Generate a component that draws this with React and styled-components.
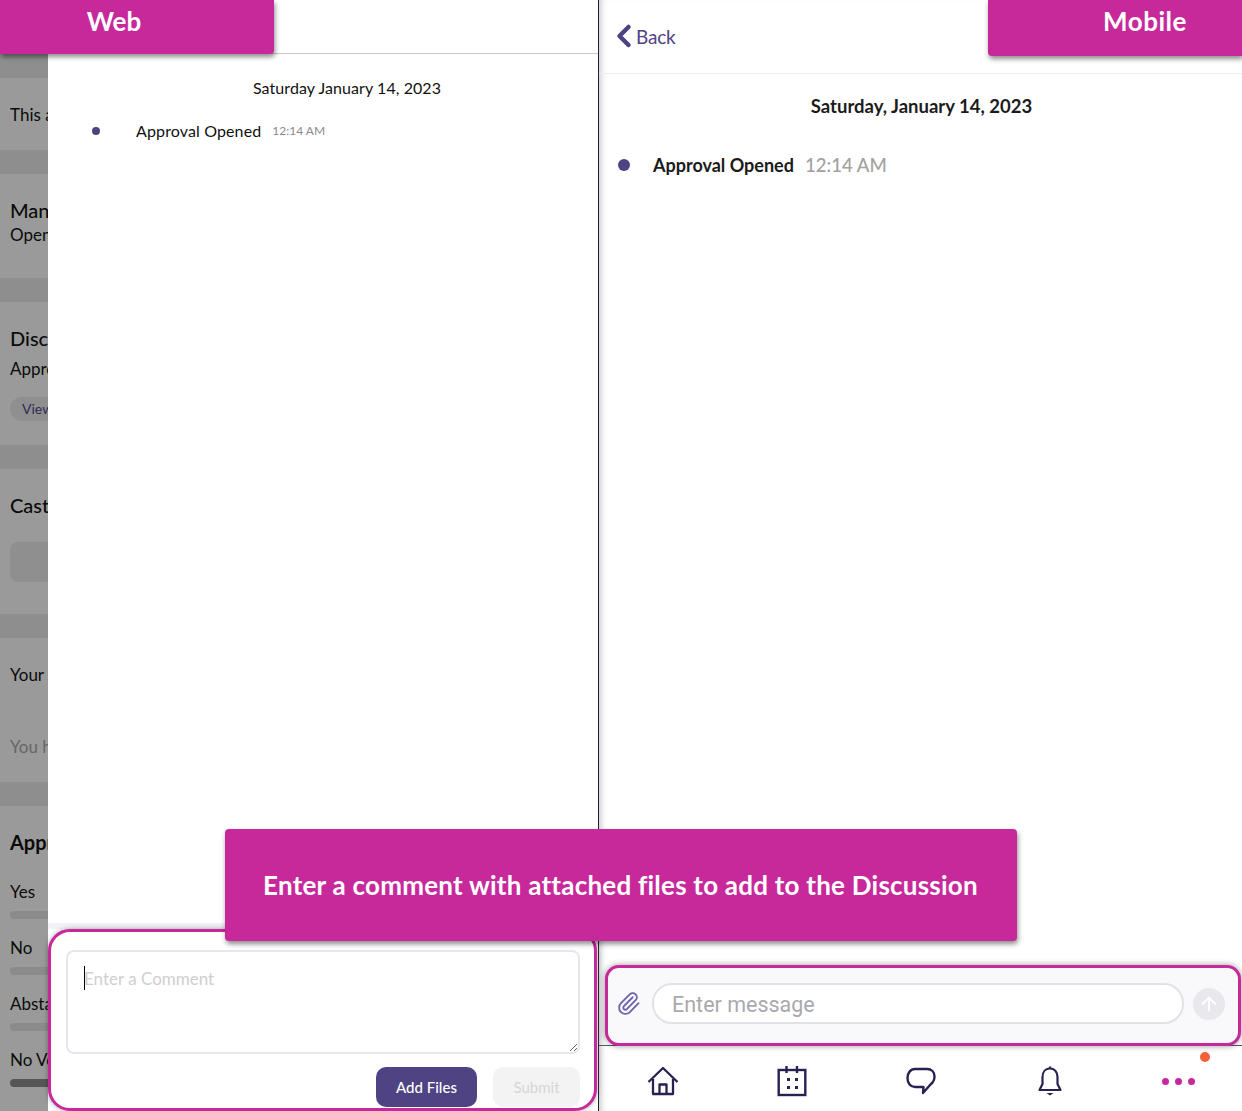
import React from "react";
import styled, { createGlobalStyle } from "styled-components";
import { ChevronLeft, Paperclip, ArrowUp } from "lucide-react";

const magenta = "#c7299b";
const purple = "#4f4384";
const navy = "#2a2152";

const GlobalStyle = createGlobalStyle`
  html, body {
    margin: 0;
    padding: 0;
    background: #fff;
    font-family: "Lato", "Liberation Sans", sans-serif;
  }
  * { box-sizing: border-box; }
`;

const Page = styled.div`
  position: relative;
  display: flex;
  width: 1242px;
  height: 1111px;
  overflow: hidden;
  background: #fff;
`;

const Callout = styled.div`
  position: absolute;
  z-index: 5;
  display: flex;
  align-items: center;
  justify-content: center;
  background: ${magenta};
  color: #fff;
  font-weight: 700;
  font-size: 26px;
  box-shadow: 1px 3px 5px rgba(0, 0, 0, 0.45);
`;

const WebLabel = styled(Callout)`
  left: 0;
  top: 0;
  width: 274px;
  height: 54px;
  padding: 5px 46px 0 0;
  align-items: flex-start;
  border-radius: 0 0 4px 0;
`;

const MobileLabel = styled(Callout)`
  left: 988px;
  top: 0;
  width: 254px;
  height: 56px;
  padding: 5px 0 0 60px;
  align-items: flex-start;
  border-radius: 0 0 0 4px;
  letter-spacing: 0.5px;
`;

const CommentLabel = styled(Callout)`
  left: 225px;
  top: 829px;
  width: 792px;
  height: 112px;
  padding-right: 1px;
  border-radius: 4px;
  letter-spacing: 0.23px;
`;

const WebSide = styled.div`
  display: flex;
  width: 598px;
  flex-shrink: 0;
`;

const Backdrop = styled.div`
  display: flex;
  flex-direction: column;
  width: 48px;
  flex-shrink: 0;
  padding-top: 54px;
  overflow: hidden;
  background: #8e8e8e;
  white-space: nowrap;
  color: #0b0b0b;
`;

const BackSection = styled.div`
  height: ${(p) => p.$h}px;
  flex-shrink: 0;
  margin-top: 24px;
  padding: ${(p) => p.$top}px 0 0 10px;
  background: #9a9a9a;
`;

const LastSection = styled(BackSection)`
  flex: 1;
  height: auto;
`;

const BackTitle = styled.div`
  font-size: 20px;
  font-weight: ${(p) => p.$bold ? 700 : 500};
  line-height: 24px;
`;

const BackText = styled.div`
  font-size: 17px;
  line-height: 24px;
  margin-top: ${(p) => p.$mt || 0}px;
  color: ${(p) => p.$muted ? "#666" : "#0b0b0b"};
`;

const BackPill = styled.div`
  width: 60px;
  height: 24px;
  margin-top: 16px;
  padding-left: 12px;
  border-radius: 12px;
  background: #8f8f8f;
  color: #322a55;
  font-size: 14px;
  line-height: 24px;
`;

const BackBox = styled.div`
  width: 60px;
  height: 40px;
  margin-top: 25px;
  border-radius: 8px;
  background: #8f8f8f;
`;

const BackBar = styled.div`
  width: 60px;
  height: 8px;
  margin: 7px 0 17px;
  border-radius: 4px;
  background: ${(p) => p.$dark ? "#565656" : "#8b8b8b"};
`;

const Panel = styled.div`
  display: flex;
  flex-direction: column;
  flex: 1;
  min-width: 0;
  background: #fff;
`;

const PanelHeader = styled.div`
  height: 54px;
  flex-shrink: 0;
  border-bottom: 1px solid #c8c8c8;
`;

const PanelBody = styled.div`
  flex: 1;
  padding: 24px 0 0 48px;
`;

const WebDate = styled.div`
  text-align: center;
  font-size: 16px;
  letter-spacing: 0.08px;
  line-height: 20px;
  color: #111;
`;

const WebRow = styled.div`
  display: flex;
  align-items: center;
  height: 20px;
  margin-top: 22px;
`;

const Dot = styled.span`
  width: ${(p) => p.$size}px;
  height: ${(p) => p.$size}px;
  flex-shrink: 0;
  border-radius: 50%;
  background: ${purple};
`;

const WebDot = styled(Dot)`
  margin: 1px 36px 0 -4px;
`;

const WebEvent = styled.span`
  font-size: 16px;
  letter-spacing: 0.13px;
  color: #111;
`;

const WebTime = styled.span`
  margin-left: 11px;
  font-size: 12px;
  color: #8a8a8a;
`;

const WebStrip = styled.div`
  height: 6px;
  flex-shrink: 0;
  background: #f3f3f7;
`;

const Composer = styled.div`
  display: flex;
  flex-direction: column;
  height: 182px;
  flex-shrink: 0;
  margin-right: 1px;
  padding: 18px 14px 0 15px;
  background: #fff;
  border: 3px solid ${magenta};
  border-radius: 22px;
  box-shadow: 0 0 5px rgba(0, 0, 0, 0.35);
`;

const CommentWrap = styled.div`
  position: relative;
  height: 104px;
  flex-shrink: 0;
`;

const CommentInput = styled.textarea`
  display: block;
  width: 100%;
  height: 100%;
  padding: 15px 16px;
  border: 2px solid #e6e6ee;
  border-radius: 8px;
  outline: none;
  background: #fff;
  font-family: inherit;
  font-size: 17px;
  line-height: 24px;

  &::placeholder {
    color: #cfcfcf;
  }
`;

const Caret = styled.span`
  position: absolute;
  left: 18px;
  top: 16px;
  width: 1px;
  height: 24px;
  background: #000;
`;

const ComposerActions = styled.div`
  display: flex;
  justify-content: flex-end;
  gap: 16px;
  margin-top: 13px;
`;

const ActionButton = styled.button`
  width: ${(p) => p.$w}px;
  height: 40px;
  padding: 0;
  border: none;
  border-radius: 10px;
  background: ${(p) => p.$primary ? purple : "#f3f3f3"};
  color: ${(p) => p.$primary ? "#fff" : "#d6d6d6"};
  font-family: inherit;
  font-size: 15px;
  font-weight: ${(p) => p.$primary ? 500 : 400};
`;

const Divider = styled.div`
  width: 1px;
  flex-shrink: 0;
  background: #20203a;
`;

const MobileSide = styled.div`
  display: flex;
  flex-direction: column;
  flex: 1;
  min-width: 0;
  box-shadow: inset 7px 0 6px -5px rgba(0, 0, 0, 0.22);
`;

const MobileHeader = styled.div`
  display: flex;
  align-items: center;
  height: 74px;
  flex-shrink: 0;
  padding: 0 0 1px 7px;
  border-bottom: 1px solid #eee;
`;

const BackLink = styled.div`
  display: flex;
  align-items: center;
  color: ${purple};
  font-size: 19px;
  letter-spacing: -0.2px;
`;

const BackChevron = styled(ChevronLeft)`
  margin-right: -6px;
`;

const MobileBody = styled.div`
  flex: 1;
  padding-top: 20px;
`;

const MobileDate = styled.div`
  padding-left: 2px;
  text-align: center;
  font-size: 18.5px;
  font-weight: 700;
  line-height: 24px;
  color: #1b1b1b;
`;

const MobileRow = styled.div`
  display: flex;
  align-items: center;
  height: 24px;
  margin-top: 35px;
  padding-left: 19px;
`;

const MobileDot = styled(Dot)`
  margin-right: 23px;
`;

const MobileEvent = styled.span`
  font-size: 18px;
  font-weight: 700;
  color: #1b1b1b;
`;

const MobileTime = styled.span`
  margin-left: 11px;
  font-size: 18.6px;
  font-weight: 500;
  color: #a2a2a2;
`;

const MessageArea = styled.div`
  flex-shrink: 0;
  height: 81px;
  padding: 0 1px 0 6px;
  border-bottom: 1px solid #5a5a5a;
`;

const MessageBar = styled.div`
  display: flex;
  align-items: center;
  height: 81px;
  padding: 0 13px 4px 8px;
  background: #f9f9fb;
  border: 3px solid ${magenta};
  border-radius: 14px;
  box-shadow: 0 0 6px rgba(0, 0, 0, 0.4);
`;

const ClipIcon = styled(Paperclip)`
  flex-shrink: 0;
  color: #6f63a8;
`;

const MessageInput = styled.div`
  flex: 1;
  height: 41px;
  margin: 0 9px 0 11px;
  padding-left: 18px;
  border: 2px solid #e2e2e6;
  border-radius: 20px;
  background: #fff;
  color: #a9a9ad;
  font-family: "Roboto", sans-serif;
  font-size: 21.5px;
  line-height: 40px;
`;

const SendButton = styled.div`
  display: flex;
  align-items: center;
  justify-content: center;
  width: 32px;
  height: 32px;
  flex-shrink: 0;
  border-radius: 50%;
  background: #e9e9ed;
  color: #fff;
`;

const BottomNav = styled.div`
  display: grid;
  grid-template-columns: repeat(5, 129px);
  align-items: center;
  height: 65px;
  flex-shrink: 0;
  margin-left: -1px;
  padding-top: 5px;
`;

const NavItem = styled.div`
  position: relative;
  display: flex;
  justify-content: center;
  color: ${navy};
`;

const MoreDots = styled.div`
  display: flex;
  gap: 6px;
`;

const MoreDot = styled.span`
  width: 7px;
  height: 7px;
  border-radius: 50%;
  background: ${magenta};
`;

const Badge = styled.span`
  position: absolute;
  left: 86px;
  top: -26px;
  width: 10px;
  height: 10px;
  border-radius: 50%;
  background: #f4603a;
`;

const HomeIcon = () => (
  <svg width="32" height="32" viewBox="0 0 32 32" fill="none" stroke="currentColor" strokeWidth="2.3" strokeLinejoin="round">
    <path d="M1.500 17 16 3l14.500 14" />
    <path d="M6 14v15h20V14" />
    <path d="M12.500 29v-9.500h7V29" />
  </svg>
);

const CalendarIcon = () => (
  <svg width="32" height="32" viewBox="0 0 32 32" fill="none" stroke="currentColor" strokeWidth="2.4">
    <rect x="2.700" y="5" width="26.600" height="25" />
    <path d="M10.500 1v7M21 1v7" />
    <g fill="currentColor" stroke="none">
      <rect x="11" y="13" width="3" height="3" />
      <rect x="19" y="13" width="3" height="3" />
      <rect x="11" y="21" width="3" height="3" />
      <rect x="19" y="21" width="3" height="3" />
    </g>
  </svg>
);

const ChatIcon = () => (
  <svg width="32" height="32" viewBox="0 0 32 32" fill="none" stroke="currentColor" strokeWidth="2.4" strokeLinejoin="round">
    <path d="M10 4h12c4.500 0 7.500 3 7.500 7.500 0 3.500-1.500 6-4 8L18 28l.5-6H10C5.500 22 2.500 18.500 2.500 13 2.500 8 5.500 4 10 4Z" />
  </svg>
);

const BellIcon = () => (
  <svg width="32" height="32" viewBox="0 0 32 32" fill="none" stroke="currentColor" strokeWidth="2.200" strokeLinejoin="round">
    <path d="M16 3.500c-5 0-7.500 4-7.500 8.500v7L5.500 25h21l-3-6v-7c0-4.500-2.500-8.500-7.500-8.500Z" />
    <path d="M16 1.500v2" />
    <path d="M12.500 28h7l-3.500 2.500Z" fill="currentColor" stroke="none" />
  </svg>
);

const App = () => {
  return (
    <Page>
      <GlobalStyle />
      <WebLabel>Web</WebLabel>
      <MobileLabel>Mobile</MobileLabel>
      <CommentLabel>Enter a comment with attached files to add to the Discussion</CommentLabel>

      <WebSide>
        <Backdrop>
          <BackSection $h={72} $top={25}>
            <BackText>This approval</BackText>
          </BackSection>
          <BackSection $h={104} $top={24}>
            <BackTitle>Manager</BackTitle>
            <BackText $mt={1}>Open</BackText>
          </BackSection>
          <BackSection $h={143} $top={24}>
            <BackTitle>Discussion</BackTitle>
            <BackText $mt={7}>Approval</BackText>
            <BackPill>View</BackPill>
          </BackSection>
          <BackSection $h={145} $top={24}>
            <BackTitle>Cast</BackTitle>
            <BackBox />
          </BackSection>
          <BackSection $h={144} $top={25}>
            <BackText>Your</BackText>
            <BackText $mt={48} $muted>You have</BackText>
          </BackSection>
          <LastSection $top={24}>
            <BackTitle $bold>Approval</BackTitle>
            <BackText $mt={26}>Yes</BackText>
            <BackBar />
            <BackText>No</BackText>
            <BackBar />
            <BackText>Abstain</BackText>
            <BackBar />
            <BackText>No Vote</BackText>
            <BackBar $dark />
          </LastSection>
        </Backdrop>

        <Panel>
          <PanelHeader />
          <PanelBody>
            <WebDate>Saturday January 14, 2023</WebDate>
            <WebRow>
              <WebDot $size={8} />
              <WebEvent>Approval Opened</WebEvent>
              <WebTime>12:14 AM</WebTime>
            </WebRow>
          </PanelBody>
          <WebStrip />
          <Composer>
            <CommentWrap>
              <CommentInput placeholder="Enter a Comment" />
              <Caret />
            </CommentWrap>
            <ComposerActions>
              <ActionButton $w={101} $primary>Add Files</ActionButton>
              <ActionButton $w={87}>Submit</ActionButton>
            </ComposerActions>
          </Composer>
        </Panel>
      </WebSide>

      <Divider />

      <MobileSide>
        <MobileHeader>
          <BackLink>
            <BackChevron size={36} strokeWidth={3} />
            Back
          </BackLink>
        </MobileHeader>
        <MobileBody>
          <MobileDate>Saturday, January 14, 2023</MobileDate>
          <MobileRow>
            <MobileDot $size={12} />
            <MobileEvent>Approval Opened</MobileEvent>
            <MobileTime>12:14 AM</MobileTime>
          </MobileRow>
        </MobileBody>
        <MessageArea>
          <MessageBar>
            <ClipIcon size={25} strokeWidth={1.8} />
            <MessageInput>Enter message</MessageInput>
            <SendButton>
              <ArrowUp size={22} strokeWidth={2} />
            </SendButton>
          </MessageBar>
        </MessageArea>
        <BottomNav>
          <NavItem><HomeIcon /></NavItem>
          <NavItem><CalendarIcon /></NavItem>
          <NavItem><ChatIcon /></NavItem>
          <NavItem><BellIcon /></NavItem>
          <NavItem>
            <MoreDots>
              <MoreDot />
              <MoreDot />
              <MoreDot />
            </MoreDots>
            <Badge />
          </NavItem>
        </BottomNav>
      </MobileSide>
    </Page>
  );
};

export default App;
